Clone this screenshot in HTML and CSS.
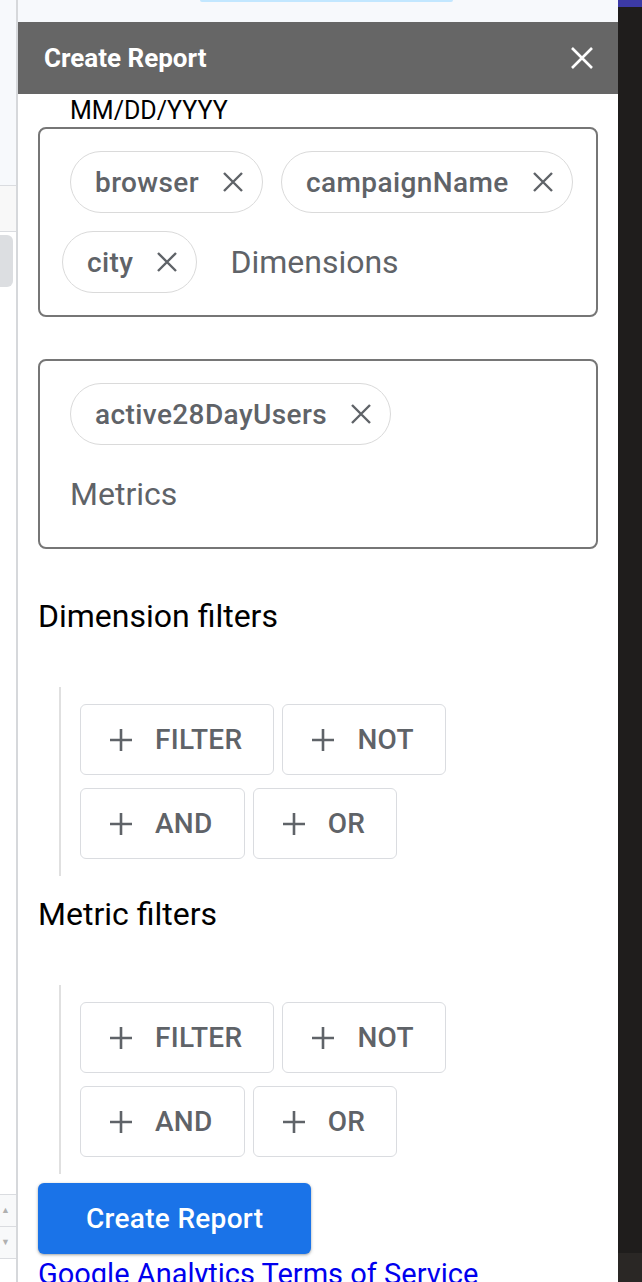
FILE: index.html
```html
<!DOCTYPE html>
<html lang="en">
<head>
    <meta charset="UTF-8">
    <meta name="viewport" content="width=device-width, initial-scale=1.0">
    <title>Create Report</title>
    <link rel="stylesheet" href="styles.css">
</head>
<body>
    <div class="app">
        <!-- strip of the spreadsheet behind the sidebar -->
        <div class="sheet-edge">
            <div class="edge-head"></div>
            <div class="edge-row"></div>
            <div class="edge-thumb"></div>
            <div class="edge-spacer"></div>
            <div class="edge-spin">
                <span class="spin-btn">&#9650;</span>
                <span class="spin-btn">&#9660;</span>
            </div>
            <div class="edge-foot"></div>
        </div>

        <div class="center">
            <div class="topbar"><span class="topbar-pill"></span></div>

            <section class="sidebar">
                <header class="sidebar-header">
                    <h1 class="sidebar-title">Create Report</h1>
                    <button class="close-btn" aria-label="Close">
                        <svg width="22" height="22" viewBox="0 0 22 22"><path d="M1 1L21 21M21 1L1 21" stroke="#fff" stroke-width="2.6" fill="none"/></svg>
                    </button>
                </header>

                <div class="sidebar-body">
                    <div class="date-hint">MM/DD/YYYY</div>

                    <div class="fields">
                        <div class="field">
                            <div class="chip-list">
                                <span class="chip">browser
                                    <svg class="chip-x" width="20" height="20" viewBox="0 0 20 20"><path d="M1 1L19 19M19 1L1 19"/></svg>
                                </span>
                                <span class="chip">campaignName
                                    <svg class="chip-x" width="20" height="20" viewBox="0 0 20 20"><path d="M1 1L19 19M19 1L1 19"/></svg>
                                </span>
                                <span class="chip chip--shift">city
                                    <svg class="chip-x" width="20" height="20" viewBox="0 0 20 20"><path d="M1 1L19 19M19 1L1 19"/></svg>
                                </span>
                                <input class="chip-input" type="text" placeholder="Dimensions">
                            </div>
                        </div>

                        <div class="field">
                            <div class="chip-list">
                                <span class="chip">active28DayUsers
                                    <svg class="chip-x" width="20" height="20" viewBox="0 0 20 20"><path d="M1 1L19 19M19 1L1 19"/></svg>
                                </span>
                                <input class="chip-input" type="text" placeholder="Metrics">
                            </div>
                        </div>
                    </div>

                    <h2 class="section-title">Dimension filters</h2>
                    <div class="filter-group">
                        <button class="filter-btn"><svg width="24" height="24" viewBox="0 0 24 24"><path d="M12 1V23M1 12H23"/></svg>FILTER</button>
                        <button class="filter-btn"><svg width="24" height="24" viewBox="0 0 24 24"><path d="M12 1V23M1 12H23"/></svg>NOT</button>
                        <button class="filter-btn"><svg width="24" height="24" viewBox="0 0 24 24"><path d="M12 1V23M1 12H23"/></svg>AND</button>
                        <button class="filter-btn"><svg width="24" height="24" viewBox="0 0 24 24"><path d="M12 1V23M1 12H23"/></svg>OR</button>
                    </div>

                    <h2 class="section-title">Metric filters</h2>
                    <div class="filter-group">
                        <button class="filter-btn"><svg width="24" height="24" viewBox="0 0 24 24"><path d="M12 1V23M1 12H23"/></svg>FILTER</button>
                        <button class="filter-btn"><svg width="24" height="24" viewBox="0 0 24 24"><path d="M12 1V23M1 12H23"/></svg>NOT</button>
                        <button class="filter-btn"><svg width="24" height="24" viewBox="0 0 24 24"><path d="M12 1V23M1 12H23"/></svg>AND</button>
                        <button class="filter-btn"><svg width="24" height="24" viewBox="0 0 24 24"><path d="M12 1V23M1 12H23"/></svg>OR</button>
                    </div>

                    <button class="create-btn">Create Report</button>
                    <a class="tos-link" href="#">Google Analytics Terms of Service</a>
                </div>
            </section>
        </div>

        <div class="dark-edge">
            <div class="dark-top"></div>
            <div class="dark-fill"></div>
            <div class="dark-foot"></div>
        </div>
    </div>
</body>
</html>
```

FILE: styles.css
```css
html, body { margin: 0; height: 1282px; overflow: hidden; }
body { font-family: Roboto, "Noto Sans", sans-serif; background: #fff; }
.app { display: flex; height: 1282px; }

/* spreadsheet strip on the left */
.sheet-edge { width: 16px; border-right: 2px solid #d6d8db; display: flex; flex-direction: column; background: #fff; }
.edge-head { height: 185px; background: #f7f9fc; }
.edge-row { height: 45px; background: #f8f8f8; border-top: 1px solid #dadce0; border-bottom: 1px solid #dadce0; }
.edge-thumb { height: 52px; width: 13px; margin-top: 3px; background: #dcdee1; border-radius: 0 6px 6px 0; }
.edge-spacer { flex: 1; }
.edge-spin { display: flex; flex-direction: column; background: #f8f9fa; border-top: 1px solid #dadce0; border-bottom: 1px solid #dadce0; }
.spin-btn { height: 31px; font-size: 9px; line-height: 31px; color: #b0b0b0; padding-left: 1px; }
.spin-btn + .spin-btn { border-top: 1px solid #dadce0; }
.edge-foot { height: 23px; }

.center { width: 600px; display: flex; flex-direction: column; }
.topbar { height: 22px; background: #f7f9fc; flex-shrink: 0; }
.topbar-pill { display: block; width: 253px; height: 2px; margin-left: 182px; background: #c2e7ff; border-radius: 0 0 6px 6px; }

/* dark window strip on the right */
.dark-edge { width: 24px; display: flex; flex-direction: column; background: #1f1d1c; }
.dark-top { height: 7px; background: #3c3aa6; }
.dark-fill { flex: 1; }
.dark-foot { height: 29px; background: #2a2725; }

/* sidebar */
.sidebar { flex: 1; background: #fff; }
.sidebar-header { height: 72px; background: #666; display: flex; align-items: center; justify-content: space-between; padding: 0 25px 0 26px; }
.sidebar-title { margin: 0; color: #fff; font-size: 26px; font-weight: 700; }
.close-btn { background: none; border: none; padding: 0; display: flex; cursor: pointer; }

.sidebar-body { padding: 0 20px; }
.date-hint { padding-left: 32px; font-size: 25px; line-height: 33px; color: #000; }

.fields { margin-bottom: 43px; }
.field { border: 2px solid #767676; border-radius: 8px; padding: 22px 22px 22px 30px; }
.field + .field { margin-top: 42px; }
.chip-list { display: flex; flex-wrap: wrap; gap: 18px; }
.chip { box-sizing: border-box; height: 62px; display: inline-flex; align-items: center; gap: 24px; padding: 0 19px 0 24px; border: 1.5px solid #dadada; border-radius: 31px; font-size: 28px; font-weight: 500; letter-spacing: 0.4px; color: #5f6368; }
.chip--shift { margin: 0 15px 0 -8px; }
.chip-x path { stroke: #5f6368; stroke-width: 2.4; fill: none; }
.chip-input { flex: 1 0 200px; width: 0; min-width: 0; height: 62px; border: none; outline: none; padding: 0; font: 400 32px Roboto, sans-serif; color: #3c4043; background: transparent; }
.chip-input::placeholder { color: #5f6368; }

.section-title { margin: 14px 0 47px; font-size: 32px; font-weight: 400; line-height: 48px; color: #000; }

.filter-group { margin-left: 21px; border-left: 2px solid #e0e0e0; padding: 17px 0 17px 19px; display: flex; flex-wrap: wrap; gap: 13px 8px; }
.filter-btn { box-sizing: border-box; height: 71px; display: inline-flex; align-items: center; gap: 22px; padding: 0 31px 0 28px; background: #fff; border: 1.5px solid #dadce0; border-radius: 6px; font: 500 28px Roboto, sans-serif; letter-spacing: 0.3px; color: #5f6368; cursor: pointer; }
.filter-btn path { stroke: #5f6368; stroke-width: 2.6; fill: none; }

.create-btn { display: block; margin-top: 9px; height: 71px; padding: 0 48px; background: #1a73e8; color: #fff; border: none; border-radius: 6px; font: 500 28px Roboto, sans-serif; letter-spacing: 0.3px; box-shadow: 0 1px 2px rgba(60,64,67,0.3), 0 1px 3px 1px rgba(60,64,67,0.15); cursor: pointer; }
.tos-link { display: block; margin-top: 3px; font-size: 29px; color: #0000ee; }
```
